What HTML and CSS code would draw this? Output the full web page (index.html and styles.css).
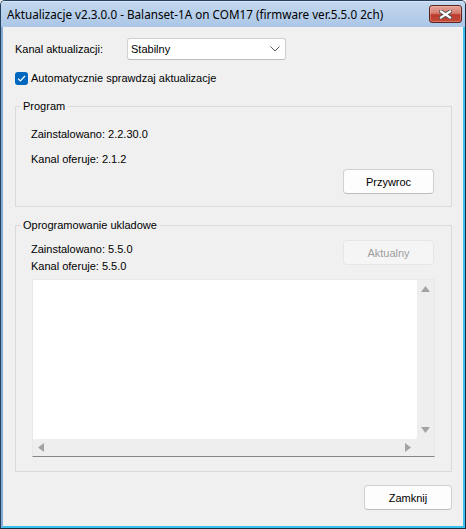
FILE: index.html
```html
<!DOCTYPE html>
<html lang="pl">
<head>
<meta charset="utf-8">
<title>Aktualizacje</title>
<link rel="stylesheet" href="styles.css">
</head>
<body>
<div class="window">
  <div class="titlebar">
    <span class="title">Aktualizacje v2.3.0.0 - Balanset-1A on COM17 (firmware ver.5.5.0 2ch)</span>
    <button class="close" type="button" aria-label="Zamknij">
      <svg width="13" height="9" viewBox="0 0 13 9">
        <path d="M2 1.5 L11 7.5 M11 1.5 L2 7.5" stroke="#4a4a4a" stroke-width="4" stroke-linecap="square"/>
        <path d="M2 1.5 L11 7.5 M11 1.5 L2 7.5" stroke="#ffffff" stroke-width="2.2" stroke-linecap="square"/>
      </svg>
    </button>
  </div>
  <div class="client">
    <div class="channel">
      <span class="channel-label">Kanal aktualizacji:</span>
      <div class="combo">
        <span>Stabilny</span>
        <svg class="chevron" width="10" height="6" viewBox="0 0 10 6"><path d="M0.5 0.5 L5 5 L9.5 0.5" fill="none" stroke="#5a5a5a" stroke-width="1"/></svg>
      </div>
    </div>
    <label class="check">
      <span class="box"><svg width="9" height="7" viewBox="0 0 9 7"><path d="M1 3.6 L3.4 6 L8 1" fill="none" stroke="#ffffff" stroke-width="1.2"/></svg></span>
      <span>Automatycznie sprawdzaj aktualizacje</span>
    </label>
    <fieldset class="group program">
      <legend>Program</legend>
      <div class="line">Zainstalowano: 2.2.30.0</div>
      <div class="line second">Kanal oferuje: 2.1.2</div>
      <div class="actions"><button class="btn" type="button">Przywroc</button></div>
    </fieldset>
    <fieldset class="group firmware">
      <legend>Oprogramowanie ukladowe</legend>
      <div class="fw-head">
        <div class="fw-info">
          <div class="line">Zainstalowano: 5.5.0</div>
          <div class="line">Kanal oferuje: 5.5.0</div>
        </div>
        <button class="btn disabled" type="button" disabled>Aktualny</button>
      </div>
      <div class="log">
        <div class="log-body">
          <div class="log-text"></div>
          <div class="vscroll">
            <svg width="9" height="6" viewBox="0 0 9 6"><polygon points="4.5,0 9,6 0,6" fill="#a3a3a3"/></svg>
            <svg width="9" height="6" viewBox="0 0 9 6"><polygon points="0,0 9,0 4.5,6" fill="#a3a3a3"/></svg>
          </div>
        </div>
        <div class="hscroll">
          <div class="htrack">
            <svg width="6" height="9" viewBox="0 0 6 9"><polygon points="0,4.5 6,0 6,9" fill="#a3a3a3"/></svg>
            <svg width="6" height="9" viewBox="0 0 6 9"><polygon points="0,0 6,4.5 0,9" fill="#a3a3a3"/></svg>
          </div>
          <div class="corner"></div>
        </div>
      </div>
    </fieldset>
    <div class="footer"><button class="btn" type="button">Zamknij</button></div>
  </div>
</div>
</body>
</html>
```
FILE: styles.css
```css
html, body {
  margin: 0;
  padding: 0;
  background: #f0f0f0;
}

.window {
  width: 466px;
  height: 529px;
  box-sizing: border-box;
  display: flex;
  flex-direction: column;
  border: 1px solid;
  border-color: #24405f #1d2c3a #1d2c3a #24405f;
  border-radius: 5px 5px 0 0;
  overflow: hidden;
  background: #f0f0f0;
  font-family: "Liberation Sans", Arial, sans-serif;
  font-size: 11px;
  line-height: 13px;
  color: #000;
}

.titlebar {
  height: 26px;
  flex: none;
  display: flex;
  align-items: flex-start;
  background: linear-gradient(#c3d8ef, #abc6e6);
  box-shadow: inset 0 1px 0 rgba(255, 255, 255, 0.4);
}

.title {
  flex: 1;
  padding: 5px 0 0 6px;
  font-family: "Noto Sans", "Open Sans", sans-serif;
  font-size: 11.7px;
  line-height: 16px;
  color: #000;
  white-space: nowrap;
  overflow: hidden;
}

.close {
  flex: none;
  width: 33px;
  height: 18px;
  margin: 4px 3px 0 0;
  padding: 0;
  display: flex;
  align-items: center;
  justify-content: center;
  border: 1px solid #5d221b;
  border-radius: 3px;
  background: linear-gradient(#e5a497 0%, #d67e70 45%, #bb3b2c 55%, #c24a3a 100%);
  box-shadow: inset 0 0 0 1px rgba(255, 200, 190, 0.35);
}

.client {
  flex: 1;
  display: flex;
  flex-direction: column;
  padding: 11px 11px 0 12px;
  border-left: 2px solid #86aad6;
  border-right: 2px solid #37c0ee;
  border-bottom: 2px solid #37c0ee;
  background: #f0f0f0;
}

.channel {
  display: flex;
  align-items: center;
  height: 22px;
}

.channel-label {
  width: 112px;
}

.combo {
  width: 159px;
  height: 22px;
  box-sizing: border-box;
  display: flex;
  align-items: center;
  padding: 0 5px 0 3px;
  background: #fff;
  border: 1px solid #d0d0d0;
  border-bottom-color: #bcbcbc;
  border-radius: 3px;
}

.combo .chevron {
  margin-left: auto;
}

.check {
  display: flex;
  align-items: center;
  height: 13px;
  margin-top: 12px;
}

.box {
  width: 13px;
  height: 13px;
  box-sizing: border-box;
  margin-right: 3px;
  display: flex;
  align-items: center;
  justify-content: center;
  background: #0067c0;
  border-radius: 3px;
}

.group {
  margin: 15px 0 0 0;
  padding: 15px 17px 12px 15px;
  border: 1px solid #dadada;
  border-radius: 0;
  min-width: 0;
}

.group legend {
  padding: 0 3px;
  margin-left: -11px;
  line-height: 13px;
}

.firmware {
  margin-top: 12px;
  padding-top: 8px;
  padding-bottom: 14px;
}

.line.second {
  margin-top: 12px;
}

.actions {
  display: flex;
  justify-content: flex-end;
  margin-top: 3px;
}

.btn {
  width: 91px;
  height: 25px;
  box-sizing: border-box;
  padding: 0;
  font-family: "Liberation Sans", Arial, sans-serif;
  font-size: 11px;
  color: #000;
  background: #fdfdfd;
  border: 1px solid #d0d0d0;
  border-bottom-color: #bdbdbd;
  border-radius: 4px;
}

.btn.disabled {
  background: #f5f5f5;
  border-color: #e6e6e6;
  color: #9e9e9e;
}

.fw-head {
  display: flex;
  justify-content: space-between;
  align-items: flex-start;
}

.fw-info {
  display: flex;
  flex-direction: column;
  gap: 4px;
  margin-top: 3px;
}

.log {
  margin: 6px -1px 0 1px;
  display: flex;
  flex-direction: column;
  border: 1px solid #e8e8e8;
  border-bottom-color: #858585;
}

.log-body {
  display: flex;
  height: 159px;
}

.log-text {
  flex: 1;
  background: #fff;
  border-bottom-right-radius: 3px;
}

.vscroll {
  width: 17px;
  flex: none;
  display: flex;
  flex-direction: column;
  align-items: center;
  justify-content: space-between;
  padding: 6px 0 6px;
  box-sizing: border-box;
  background: #eeeeee;
}

.hscroll {
  display: flex;
  height: 17px;
  background: #eeeeee;
}

.htrack {
  flex: 1;
  display: flex;
  align-items: center;
  justify-content: space-between;
  padding: 0 6px 0 5px;
}

.corner {
  width: 17px;
  flex: none;
}

.footer {
  display: flex;
  justify-content: flex-end;
  margin-top: 13px;
}

.footer .btn {
  width: 88px;
}
```
